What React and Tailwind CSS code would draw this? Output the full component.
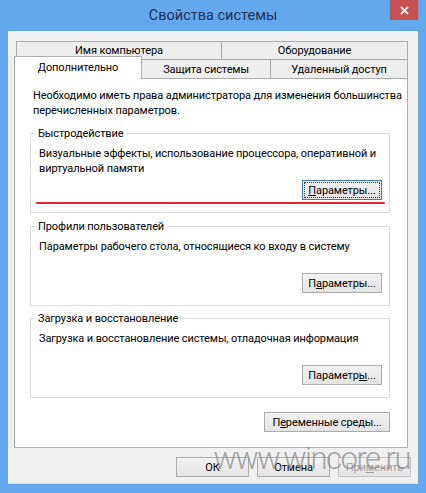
import React from "react";

function Btn({ children, w, focused, disabled }) {
    const border = focused ? "border-[#3c7fb1]" : disabled ? "border-[#c4c4c4]" : "border-[#acacac]";
    return (
        <div className={`${w} h-[20px] border ${border} bg-linear-to-b from-[#f3f3f3] to-[#e4e4e4] flex p-[1px] ${disabled ? "text-[#a0a0a0]" : "text-black"}`}>
            {focused ? (
                <span className="flex-1 flex items-center justify-center border border-dotted border-[#333]">{children}</span>
            ) : (
                <span className="flex-1 flex items-center justify-center">{children}</span>
            )}
        </div>
    );
}

function Group({ title, children, button, line, className }) {
    return (
        <fieldset className={`min-w-0 w-[360px] border border-[#dcdcdc] pl-[8px] pr-[7px] pt-[5px] ${line ? "pb-[8px]" : "pb-[12px]"} ${className}`}>
            <legend className="-ml-[3px] px-[2px] leading-[15px]">{title}</legend>
            <div className="h-[54px] flex flex-col">
                <div className="whitespace-nowrap">{children}</div>
                <div className="mt-auto self-end">{button}</div>
            </div>
            {line && <div className="mt-[2px] -ml-[3px] -mr-[3px] h-[2px] rounded-full bg-[#e3262f]" />}
        </fieldset>
    );
}

export default function App() {
    return (
        <div className="w-[426px] h-[493px] bg-[#63a8ec] flex flex-col px-[8px] font-['Roboto',Arial,sans-serif] text-[11px] leading-[15px] tracking-[-0.1px] text-black">
            {/* title bar */}
            <div className="h-[31px] shrink-0 flex items-start">
                <div className="w-[28px]" />
                <div className="flex-1 text-center text-[14.5px] leading-[31px] tracking-normal text-[#1b3358]">Свойства системы</div>
                <div className="w-[28px] h-[20px] bg-[#c75050] flex items-center justify-center">
                    <svg width="9" height="9" viewBox="0 0 9 9">
                        <path d="M1 1 8 8M8 1 1 8" stroke="#fff" strokeWidth="1.8" />
                    </svg>
                </div>
            </div>

            {/* client area */}
            <div className="flex-1 mb-[9px] bg-[#f0f0f0] border-b border-[#cfe3f7] flex flex-col pt-[10px]">
                <div className="flex ml-[8px] h-[18px]">
                    <div className="w-[205px] border-t border-l border-[#acacac] bg-[#eeeeee] text-center leading-[18px]">Имя компьютера</div>
                    <div className="w-[187px] border-t border-l border-r border-[#acacac] bg-[#eeeeee] text-center leading-[18px]">Оборудование</div>
                </div>
                <div className="flex items-start ml-[6px] h-[19px]">
                    <div className="relative z-10 w-[128px] h-[23px] -mt-[3px] bg-white border-t border-l border-r border-[#acacac] text-center pt-[3px]">Дополнительно</div>
                    <div className="w-[129px] h-[19px] border-t border-r border-[#acacac] bg-[#eeeeee] text-center leading-[19px]">Защита системы</div>
                    <div className="w-[137px] h-[19px] border-t border-r border-[#acacac] bg-[#eeeeee] text-center leading-[19px]">Удаленный доступ</div>
                </div>

                <div className="ml-[6px] w-[394px] h-[370px] bg-white border border-[#acacac] pl-[15px] pr-[17px] pt-[9px] flex flex-col">
                    <p className="ml-[3px] whitespace-nowrap">
                        Необходимо иметь права администратора для изменения большинства
                        <br />
                        перечисленных параметров.
                    </p>

                    <Group
                        title="Быстродействие"
                        className="mt-[8px]"
                        line
                        button={<Btn w="w-[80px]" focused><u>П</u>араметры...</Btn>}
                    >
                        Визуальные эффекты, использование процессора, оперативной и
                        <br />
                        виртуальной памяти
                    </Group>

                    <Group
                        title="Профили пользователей"
                        className="mt-[6px]"
                        button={<Btn w="w-[80px]">П<u>а</u>раметры...</Btn>}
                    >
                        Параметры рабочего стола, относящиеся ко входу в систему
                    </Group>

                    <Group
                        title="Загрузка и восстановление"
                        className="mt-[5px]"
                        button={<Btn w="w-[80px]">Параметр<u>ы</u>...</Btn>}
                    >
                        Загрузка и восстановление системы, отладочная информация
                    </Group>

                    <div className="flex justify-end mt-[14px]">
                        <Btn w="w-[126px]">П<u>е</u>ременные среды...</Btn>
                    </div>
                </div>

                <div className="relative flex justify-end gap-[8px] mt-[9px] pr-[7px]">
                    <Btn w="w-[73px]">ОК</Btn>
                    <Btn w="w-[73px]">Отмена</Btn>
                    <Btn w="w-[73px]" disabled>При<u>м</u>енить</Btn>
                    <span className="absolute right-[8px] -top-[14px] text-[31px] leading-none tracking-[-1.5px] font-['Roboto',sans-serif] font-light text-[#8a8a8a]/75 pointer-events-none">www.wincore.ru</span>
                </div>
            </div>
        </div>
    );
}
